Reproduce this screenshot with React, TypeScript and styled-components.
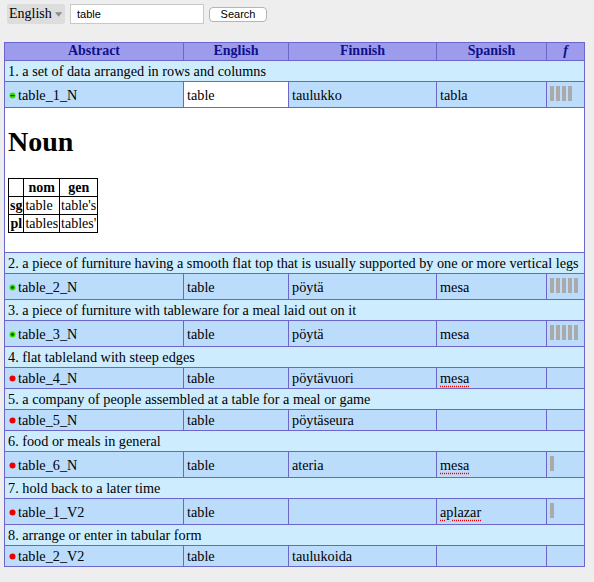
import React from "react";
import styled, { createGlobalStyle } from "styled-components";

const GlobalStyle = createGlobalStyle`
  body {
    margin: 0;
    background: #eeeeee;
    font-family: "Liberation Serif", "Times New Roman", serif;
    color: #000;
  }
`;

const Page = styled.div`
  padding: 4px;
`;

const SearchBar = styled.form`
  display: flex;
  align-items: center;
  margin: 0 0 18px 3px;
`;

const LangSelect = styled.div`
  display: flex;
  align-items: center;
  gap: 3px;
  height: 20px;
  width: 58px;
  box-sizing: border-box;
  padding: 0 3px 0 2px;
  background: #dddddd;
  font-size: 14px;
  border-radius: 2px;
`;

const SearchInput = styled.input`
  margin-left: 5px;
  width: 134px;
  height: 20px;
  box-sizing: border-box;
  border: 1px solid #c8c8c8;
  background: #fff;
  padding: 0 6px;
  font-family: "Liberation Sans", Arial, sans-serif;
  font-size: 11px;
  outline: none;
`;

const SearchButton = styled.button`
  margin-left: 5px;
  width: 58px;
  height: 15px;
  box-sizing: border-box;
  border: 1px solid #b4b4b4;
  border-radius: 4px;
  background: #fff;
  font-family: "Liberation Sans", Arial, sans-serif;
  font-size: 11px;
  line-height: 12px;
  padding: 0;
`;

const Grid = styled.table`
  width: 580px;
  border-collapse: collapse;
  table-layout: fixed;
  font-size: 14.25px;
  line-height: 16px;
  border: 1px solid #6a66cc;
`;

const Head = styled.th<{ $italic?: boolean }>`
  background: #9d9cec;
  color: #10108a;
  font-size: 14px;
  font-weight: bold;
  font-style: ${(p) => (p.$italic ? "italic" : "normal")};
  border: 1px solid #6a66cc;
  padding: 0 2px 1px;
  text-align: center;
`;

const GlossCell = styled.td`
  background: #cdecfe;
  border: 1px solid #6a66cc;
  padding: 2px 3px;
  white-space: nowrap;
`;

const Cell = styled.td<{ $selected?: boolean }>`
  background: ${(p) => (p.$selected ? "#ffffff" : "#bcdcfc")};
  border: 1px solid #6a66cc;
  padding: 2px 3px;
  white-space: nowrap;
`;

const Checked = styled.span`
  text-decoration: underline dotted #e00000;
  text-underline-offset: 3px;
`;

const Dot = styled.svg`
  margin: 0 2px 0 1px;
  vertical-align: 1px;
`;

const BarWrap = styled.div`
  display: flex;
  gap: 2px;
  height: 21px;
  box-sizing: border-box;
  padding-top: 2px;
  align-items: flex-start;
`;

const Bar = styled.span`
  width: 4px;
  height: 15px;
  background: #aaaaaa;
`;

const DetailCell = styled.td`
  background: #ffffff;
  border: 1px solid #6a66cc;
  padding: 0 3px;
`;

const Pos = styled.h1`
  font-size: 28px;
  line-height: 32px;
  margin: 18px 0 20px 0;
`;

const Inflection = styled.table`
  border-collapse: collapse;
  margin: 0 0 19px 0;
  font-size: 14px;
  line-height: 17px;

  th,
  td {
    border: 1px solid #000;
    padding: 0 1px;
  }
`;

type Status = "ok" | "good" | "bad";

type Sense = {
  gloss: string;
  abs: string;
  status: Status;
  en: string;
  fi: string;
  es: string;
  checked?: boolean;
  bars: number;
  open?: boolean;
};

const senses: Sense[] = [
  { gloss: "1. a set of data arranged in rows and columns", abs: "table_1_N", status: "ok", en: "table", fi: "taulukko", es: "tabla", bars: 4, open: true },
  { gloss: "2. a piece of furniture having a smooth flat top that is usually supported by one or more vertical legs", abs: "table_2_N", status: "good", en: "table", fi: "pöytä", es: "mesa", bars: 5 },
  { gloss: "3. a piece of furniture with tableware for a meal laid out on it", abs: "table_3_N", status: "good", en: "table", fi: "pöytä", es: "mesa", bars: 5 },
  { gloss: "4. flat tableland with steep edges", abs: "table_4_N", status: "bad", en: "table", fi: "pöytävuori", es: "mesa", checked: true, bars: 0 },
  { gloss: "5. a company of people assembled at a table for a meal or game", abs: "table_5_N", status: "bad", en: "table", fi: "pöytäseura", es: "", bars: 0 },
  { gloss: "6. food or meals in general", abs: "table_6_N", status: "bad", en: "table", fi: "ateria", es: "mesa", checked: true, bars: 1 },
  { gloss: "7. hold back to a later time", abs: "table_1_V2", status: "bad", en: "table", fi: "", es: "aplazar", checked: true, bars: 1 },
  { gloss: "8. arrange or enter in tabular form", abs: "table_2_V2", status: "bad", en: "table", fi: "taulukoida", es: "", bars: 0 },
];

const StatusDot = ({ status }: { status: Status }) => (
  <Dot width="7" height="7" viewBox="0 0 7 7">
    <circle cx="3.5" cy="3.5" r="3" fill={status === "bad" ? "#ee0000" : "#33dd00"} />
    {status === "ok" && <rect x="1.5" y="3" width="4" height="1.2" fill="#114400" />}
    {status === "good" && <circle cx="3.5" cy="3.5" r="1.3" fill="#113300" />}
  </Dot>
);

const App = () => {
  return (
    <Page>
      <GlobalStyle />
      <SearchBar onSubmit={(e) => e.preventDefault()}>
        <LangSelect>
          English
          <svg width="8" height="5" viewBox="0 0 8 5">
            <path d="M0 0 L8 0 L4 5 Z" fill="#8a8a8a" />
          </svg>
        </LangSelect>
        <SearchInput defaultValue="table" />
        <SearchButton type="submit">Search</SearchButton>
      </SearchBar>

      <Grid>
        <colgroup>
          <col style={{ width: 179 }} />
          <col style={{ width: 105 }} />
          <col style={{ width: 148 }} />
          <col style={{ width: 110 }} />
          <col style={{ width: 38 }} />
        </colgroup>
        <thead>
          <tr>
            <Head>Abstract</Head>
            <Head>English</Head>
            <Head>Finnish</Head>
            <Head>Spanish</Head>
            <Head $italic>f</Head>
          </tr>
        </thead>
        <tbody>
          {senses.map((s) => (
            <React.Fragment key={s.abs}>
              <tr>
                <GlossCell colSpan={5}>{s.gloss}</GlossCell>
              </tr>
              <tr>
                <Cell>
                  <StatusDot status={s.status} />
                  {s.abs}
                </Cell>
                <Cell $selected={s.open}>{s.en}</Cell>
                <Cell>{s.fi}</Cell>
                <Cell>{s.checked ? <Checked>{s.es}</Checked> : s.es}</Cell>
                <Cell>
                  {s.bars > 0 && (
                    <BarWrap>
                      {Array.from({ length: s.bars }).map((_, i) => (
                        <Bar key={i} />
                      ))}
                    </BarWrap>
                  )}
                </Cell>
              </tr>
              {s.open && (
                <tr>
                  <DetailCell colSpan={5}>
                    <Pos>Noun</Pos>
                    <Inflection>
                      <tbody>
                        <tr>
                          <th></th>
                          <th>nom</th>
                          <th>gen</th>
                        </tr>
                        <tr>
                          <th>sg</th>
                          <td>table</td>
                          <td>table's</td>
                        </tr>
                        <tr>
                          <th>pl</th>
                          <td>tables</td>
                          <td>tables'</td>
                        </tr>
                      </tbody>
                    </Inflection>
                  </DetailCell>
                </tr>
              )}
            </React.Fragment>
          ))}
        </tbody>
      </Grid>
    </Page>
  );
};

export default App;
